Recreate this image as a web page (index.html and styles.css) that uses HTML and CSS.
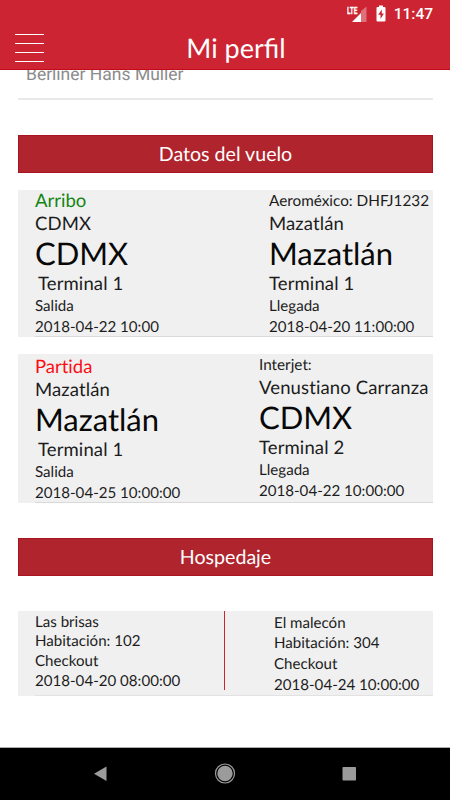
FILE: index.html
```html
<!DOCTYPE html>
<html lang="es">
<head>
<meta charset="utf-8">
<title>Mi perfil</title>
<link rel="stylesheet" href="styles.css">
</head>
<body>
<header class="header">
  <div class="status">
    <svg class="signal" width="20" height="18" viewBox="0 0 20 18">
      <path d="M5 17H14V8z" fill="#fff"/>
      <path d="M14 17V6L19.500 1.500V17z" fill="#fff" opacity=".35"/>
      <text x="0" y="8.500" class="lte" textLength="10.500" lengthAdjust="spacingAndGlyphs">LTE</text>
    </svg>
    <svg class="battery" width="10" height="17" viewBox="0 0 10 17">
      <path d="M3 .500h4v1.500h1.500q1 0 1 1v12.500q0 1-1 1h-7q-1 0-1-1V3q0-1 1-1H3z" fill="#fff"/>
      <path d="M5.800 4.500L2.200 9.800h2.300v4.200l3.400-5.600H5.800z" fill="#cc2432"/>
    </svg>
    <span class="clock">11:47</span>
  </div>
  <div class="toolbar">
    <div class="menu"><i></i><i></i><i></i><i></i></div>
    <h1 class="title">Mi perfil</h1>
  </div>
</header>
<main class="content">
  <div class="field"><span class="field-value">Berliner Hans Müller</span></div>
  <h2 class="section">Datos del vuelo</h2>
  <section class="card arrival">
    <div class="col from">
      <p class="kind green">Arribo</p>
      <p class="city">CDMX</p>
      <p class="big">CDMX</p>
      <p class="terminal indent">Terminal 1</p>
      <p class="small">Salida</p>
      <p class="small">2018-04-22 10:00</p>
    </div>
    <div class="col to">
      <p class="flight">Aeroméxico: DHFJ1232</p>
      <p class="city">Mazatlán</p>
      <p class="big">Mazatlán</p>
      <p class="terminal">Terminal 1</p>
      <p class="small">Llegada</p>
      <p class="small">2018-04-20 11:00:00</p>
    </div>
  </section>
  <section class="card departure">
    <div class="col from">
      <p class="kind red">Partida</p>
      <p class="city">Mazatlán</p>
      <p class="big">Mazatlán</p>
      <p class="terminal indent">Terminal 1</p>
      <p class="small">Salida</p>
      <p class="small">2018-04-25 10:00:00</p>
    </div>
    <div class="col to">
      <p class="flight">Interjet:</p>
      <p class="city">Venustiano Carranza</p>
      <p class="big">CDMX</p>
      <p class="terminal">Terminal 2</p>
      <p class="small">Llegada</p>
      <p class="small">2018-04-22 10:00:00</p>
    </div>
  </section>
  <h2 class="section lodging">Hospedaje</h2>
  <section class="card hotels">
    <div class="hotel first">
      <p>Las brisas</p>
      <p>Habitación: 102</p>
      <p>Checkout</p>
      <p>2018-04-20 08:00:00</p>
    </div>
    <div class="hotel second">
      <p>El malecón</p>
      <p>Habitación: 304</p>
      <p>Checkout</p>
      <p>2018-04-24 10:00:00</p>
    </div>
  </section>
</main>
<nav class="navbar">
  <svg width="450" height="52" viewBox="0 0 450 52" fill="#9b9b9b">
    <path d="M94 25.800L106.500 18.500V33z"/>
    <circle cx="225" cy="25.500" r="7.700"/>
    <circle cx="225" cy="25.500" r="9.500" fill="none" stroke="#9b9b9b" stroke-width="1.200"/>
    <rect x="342.500" y="19" width="13.500" height="13.500" rx=".8"/>
  </svg>
</nav>
</body>
</html>
```
FILE: styles.css
```css
* { box-sizing: border-box; }
body {
  margin: 0;
  width: 450px;
  height: 800px;
  overflow: hidden;
  display: flex;
  flex-direction: column;
  background: #fff;
  color: #1c1c1c;
  font-family: Lato, sans-serif;
  text-rendering: geometricPrecision;
}
p, h1, h2 { margin: 0; font-weight: 400; white-space: nowrap; }

.header {
  flex: none;
  height: 70px;
  background: #cc2432;
  border-bottom: 1px solid #c40a18;
  color: #fff;
}
.status {
  height: 27px;
  padding-right: 17px;
  display: flex;
  justify-content: flex-end;
  align-items: center;
}
.signal { margin: 0 9px 0 0; }
.lte { font: 700 10px Roboto, sans-serif; fill: #fff; stroke: #fff; stroke-width: .3px; }
.battery { margin-right: 8px; }
.clock { font: 500 15.500px/28px Roboto, sans-serif; }
.toolbar {
  height: 42px;
  display: grid;
  grid-template-columns: 44px 1fr 44px;
}
.menu {
  padding: 7px 0 0 15px;
  display: flex;
  flex-direction: column;
  gap: 8px;
}
.menu i { width: 29px; height: 1px; background: #fff; }
.title {
  padding-left: 22px;
  text-align: center;
  font-size: 27px;
  line-height: 41px;
}

.content {
  flex: 1;
  min-height: 0;
  padding: 0 17px 0 18px;
  overflow: hidden;
}
.field {
  display: flex;
  height: 30px;
  padding-left: 8px;
  border-bottom: 2px solid #e9e9e9;
  color: #8b8b8b;
  font: 17.500px/20px Roboto, sans-serif;
}
.field-value { margin-top: -5px; }
.section {
  height: 38px;
  margin: 35px 0 17px;
  background: #b0242e;
  border: 1px solid #a91421;
  color: #fff;
  text-align: center;
  font-size: 19.600px;
  line-height: 38px;
}
.card {
  display: flex;
  background: #f0f0f0;
  border-radius: 1px;
  font-variant-ligatures: none;
}
.arrival { height: 147px; margin-bottom: 17px; }
.departure { height: 149px; }
.arrival .from { width: 251px; }
.departure .from { width: 241px; padding-top: 2px; }
.from { padding-left: 17px; }
.card::after {
  content: "";
  order: 3;
  width: 398px;
  height: 1px;
  margin-left: -398px;
  align-self: flex-end;
  background: #d9d9d9;
}
.col { flex: none; }
.to { width: 164px; }
.departure .to { width: 174px; }
.kind { font-size: 18.500px; line-height: 20px; }
.green { color: #138513; }
.red { color: #fb0d13; }
.flight { font-size: 15.300px; line-height: 23px; margin-bottom: -3px; }
.city { font-size: 18.500px; line-height: 26px; letter-spacing: .12px; }
.big { font-size: 31px; line-height: 34px; color: #080808; }
.terminal { font-size: 18.500px; line-height: 26px; letter-spacing: .12px; }
.indent { padding-left: 3px; }
.small { font-size: 15.100px; line-height: 20.500px; }

.lodging { margin: 35px 0 35px; }
.hotels { height: 85px; font-size: 15.100px; }
.hotels::after { background: #e2e2e2; }
.hotel { flex: none; }
.first {
  width: 207px;
  height: 79px;
  padding: 1.500px 0 0 17px;
  border-right: 1px solid #cc2432;
  line-height: 19.700px;
}
.second { width: 208px; padding-left: 49px; padding-top: 1.500px; line-height: 20.800px; }

.navbar { flex: none; height: 53px; background: #000; border-top: 1px solid #aaa; }
.navbar svg { display: block; }
```
